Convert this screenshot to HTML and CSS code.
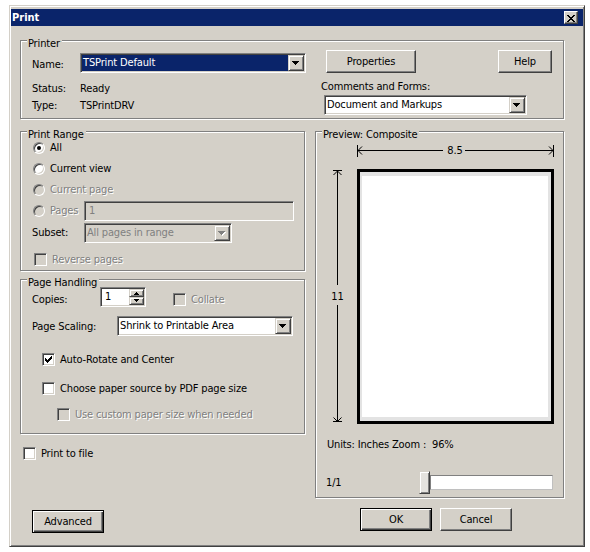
FILE: index.html
```html
<!DOCTYPE html>
<html>
<head>
<meta charset="utf-8">
<title>Print</title>
<link rel="stylesheet" href="styles.css">
</head>
<body>
<div class="window">
  <div class="titlebar">
    <span class="title">Print</span>
    <button class="close-btn" aria-label="Close"><svg width="8" height="7" viewBox="0 0 8 7"><path d="M0 0h2v1h-2z M6 0h2v1h-2z M1 1h2v1h-2z M5 1h2v1h-2z M2 2h4v1h-4z M3 3h2v1h-2z M2 4h4v1h-4z M1 5h2v1h-2z M5 5h2v1h-2z M0 6h2v1h-2z M6 6h2v1h-2z"/></svg></button>
  </div>
  <div class="content">
    <div class="group printer">
      <span class="caption">Printer</span>
      <div class="printer-left">
        <div class="row name-row">
          <span class="lbl w48">Name:</span>
          <div class="combo name-combo">
            <span class="combo-text sel">TSPrint Default</span>
            <span class="combo-btn"><svg width="7" height="4" viewBox="0 0 7 4"><path d="M0 0h7v1h-1v1h-1v1h-1v1h-1v-1h-1v-1h-1v-1h-1z"/></svg></span>
          </div>
        </div>
        <div class="row info status-row"><span class="lbl w48">Status:</span><span>Ready</span></div>
        <div class="row info type-row"><span class="lbl w48">Type:</span><span>TSPrintDRV</span></div>
      </div>
      <div class="printer-right">
        <div class="btn-row">
          <button class="btn props">Properties</button>
          <button class="btn help">Help</button>
        </div>
        <div class="comments-label">Comments and Forms:</div>
        <div class="combo comments-combo">
          <span class="combo-text">Document and Markups</span>
          <span class="combo-btn"><svg width="7" height="4" viewBox="0 0 7 4"><path d="M0 0h7v1h-1v1h-1v1h-1v1h-1v-1h-1v-1h-1v-1h-1z"/></svg></span>
        </div>
      </div>
    </div>

    <div class="columns">
      <div class="col-left">
        <div class="group range">
          <span class="caption">Print Range</span>
          <div class="row r21"><span class="radio checked"></span><span>All</span></div>
          <div class="row r21"><span class="radio"></span><span>Current view</span></div>
          <div class="row r21 disabled"><span class="radio"></span><span>Current page</span></div>
          <div class="row r21 disabled">
            <span class="radio"></span><span class="w34">Pages</span>
            <div class="field pages-field">1</div>
          </div>
          <div class="row r21 subset-row">
            <span class="lbl w52">Subset:</span>
            <div class="combo disabled-combo subset-combo">
              <span class="combo-text">All pages in range</span>
              <span class="combo-btn"><svg width="8" height="5" viewBox="0 0 8 5"><path fill="#fff" d="M1 1h7v1h-1v1h-1v1h-1v1h-1v-1h-1v-1h-1v-1h-1z"/><path fill="#808080" d="M0 0h7v1h-1v1h-1v1h-1v1h-1v-1h-1v-1h-1v-1h-1z"/></svg></span>
            </div>
          </div>
          <div class="row r13 disabled reverse-row"><span class="check"></span><span>Reverse pages</span></div>
        </div>

        <div class="group handling">
          <span class="caption">Page Handling</span>
          <div class="row copies-row">
            <span class="lbl w68">Copies:</span>
            <div class="spin">
              <span class="spin-text">1</span>
              <span class="spin-btns">
                <span class="spin-btn"><svg width="5" height="3" viewBox="0 0 5 3"><path d="M2 0h1v1h1v1h1v1h-5v-1h1v-1h1z"/></svg></span>
                <span class="spin-btn down"><svg width="5" height="3" viewBox="0 0 5 3"><path d="M0 0h5v1h-1v1h-1v1h-1v-1h-1v-1h-1z"/></svg></span>
              </span>
            </div>
            <span class="check collate"></span><span class="disabled-text collate-text">Collate</span>
          </div>
          <div class="row scaling-row">
            <span class="lbl w85">Page Scaling:</span>
            <div class="combo scaling-combo">
              <span class="combo-text">Shrink to Printable Area</span>
              <span class="combo-btn"><svg width="7" height="4" viewBox="0 0 7 4"><path d="M0 0h7v1h-1v1h-1v1h-1v1h-1v-1h-1v-1h-1v-1h-1z"/></svg></span>
            </div>
          </div>
          <div class="row r13 auto-row">
            <span class="check"><svg width="7" height="7" viewBox="0 0 7 7"><path d="M0 2h1v1h1v1h1v-1h1v-1h1v-1h1v-1h1v3h-1v1h-1v1h-1v1h-1v1h-1v-1h-1v-1h-1z"/></svg></span>
            <span>Auto-Rotate and Center</span>
          </div>
          <div class="row r13 choose-row"><span class="check white"></span><span>Choose paper source by PDF page size</span></div>
          <div class="row r13 disabled custom-row"><span class="check"></span><span>Use custom paper size when needed</span></div>
        </div>

        <div class="row r13 file-row"><span class="check white"></span><span>Print to file</span></div>
        <button class="btn default advanced">Advanced</button>
      </div>

      <div class="col-right">
        <div class="group preview">
          <span class="caption">Preview: Composite</span>
          <svg class="hdim" width="197" height="13" viewBox="0 0 197 13">
            <g stroke="#000" fill="none" stroke-width="1">
              <line x1="0.5" y1="0" x2="0.5" y2="12"/>
              <line x1="196.5" y1="0" x2="196.5" y2="12"/>
              <line x1="0.5" y1="5.5" x2="86" y2="5.5"/>
              <line x1="108" y1="5.5" x2="196.5" y2="5.5"/>
              <polyline points="5,1.5 1,5.5 5,9.5"/>
              <polyline points="192,1.5 196,5.5 192,9.5"/>
            </g>
            <text class="dim-text" x="98" y="9" text-anchor="middle">8.5</text>
          </svg>
          <div class="page-row">
            <svg class="vdim" width="16" height="255" viewBox="0 0 16 255">
              <g stroke="#000" fill="none" stroke-width="1">
                <line x1="3" y1="1.5" x2="12" y2="1.5"/>
                <polyline points="3.5,6 7.5,2 11.5,6"/>
                <line x1="7.5" y1="1.5" x2="7.5" y2="116"/>
                <line x1="7.5" y1="136" x2="7.5" y2="252.5"/>
                <polyline points="3.5,248.5 7.5,252.5 11.5,248.5"/>
                <line x1="3" y1="252.5" x2="12" y2="252.5"/>
              </g>
              <text class="dim-text" x="7.5" y="131" text-anchor="middle">11</text>
            </svg>
            <div class="page"><div class="page-inner"></div></div>
          </div>
          <div class="units">Units: Inches Zoom :&nbsp; 96%</div>
          <div class="slider-row">
            <span class="pagenum">1/1</span>
            <div class="slider"><span class="thumb"></span><span class="track"></span></div>
          </div>
        </div>
        <div class="ok-row">
          <button class="btn default ok">OK</button>
          <button class="btn cancel">Cancel</button>
        </div>
      </div>
    </div>
  </div>
</div>
</body>
</html>
```

FILE: styles.css
```css
* { box-sizing: border-box; }

body {
  margin: 0;
  background: #fff;
  color: #000;
  font-family: "DejaVu Sans Condensed", "Liberation Sans", sans-serif;
  font-size: 11px;
  line-height: 13px;
  letter-spacing: -0.15px;
}

svg { display: block; }

.window {
  width: 576px;
  height: 542px;
  margin: 5px 0 0 9px;
  background: #d4d0c8;
  border: 1px solid;
  border-color: #d4d0c8 #404040 #404040 #d4d0c8;
  box-shadow: inset 1px 1px #fff, inset -1px -1px #808080;
  padding: 3px 1px 1px 1px;
}

.titlebar {
  height: 17px;
  background: #0a246a;
  display: flex;
  align-items: center;
  padding: 0 5px 0 1px;
}

.title {
  flex: 1;
  color: #fff;
  font-weight: bold;
  letter-spacing: 0;
}

.close-btn {
  width: 14px;
  height: 13px;
  padding: 0;
  margin: 0;
  background: #d4d0c8;
  border: 1px solid;
  border-color: #fff #404040 #404040 #fff;
  box-shadow: inset -1px -1px #808080;
  display: block;
}
.close-btn svg { margin: 2px 0 0 2px; }

.content {
  padding: 14px 19px 0 9px;
}

/* group boxes */
.group {
  position: relative;
  border: 1px solid #808080;
  box-shadow: 1px 1px 0 #fff, inset 1px 1px 0 #fff;
}
.caption {
  position: absolute;
  top: -4px;
  left: 6px;
  padding: 0 2px 0 1px;
  background: #d4d0c8;
  white-space: nowrap;
}

.row {
  display: flex;
  align-items: center;
  white-space: nowrap;
}
.r21 { height: 21px; }
.r13 { height: 13px; }

.w34 { width: 34px; flex: none; }
.w48 { width: 48px; flex: none; }
.w52 { width: 52px; flex: none; }
.w68 { width: 68px; flex: none; }
.w85 { width: 85px; flex: none; }

.disabled, .disabled-text {
  color: #808080;
  text-shadow: 1px 1px 0 #fff;
}

/* buttons */
.btn {
  display: block;
  margin: 0;
  padding: 0;
  height: 23px;
  font: inherit;
  letter-spacing: inherit;
  color: #000;
  background: #d4d0c8;
  border: 1px solid;
  border-color: #fff #404040 #404040 #fff;
  box-shadow: inset -1px -1px #808080;
}
.btn.default {
  border: 1px solid #000;
  box-shadow: inset 1px 1px #fff, inset -1px -1px #404040, inset -2px -2px #808080;
}

/* combos / fields */
.combo {
  display: flex;
  height: 20px;
  padding: 1px;
  background: #fff;
  border: 1px solid;
  border-color: #808080 #fff #fff #808080;
  box-shadow: inset 1px 1px #404040, inset -1px -1px #d4d0c8;
  white-space: nowrap;
}
.combo-text {
  flex: 1;
  padding-left: 1px;
  line-height: 16px;
  overflow: hidden;
}
.combo-text.sel {
  background: #0a246a;
  color: #fff;
}
.combo-btn {
  width: 16px;
  height: 16px;
  flex: none;
  background: #d4d0c8;
  border: 1px solid;
  border-color: #d4d0c8 #404040 #404040 #d4d0c8;
  box-shadow: inset 1px 1px #fff, inset -1px -1px #808080;
}
.combo-btn svg { margin: 5px 0 0 3px; }
.disabled-combo { background: #d4d0c8; color: #808080; }

.field {
  height: 20px;
  padding-left: 4px;
  line-height: 18px;
  border: 1px solid;
  border-color: #808080 #fff #fff #808080;
  box-shadow: inset 1px 1px #404040, inset -1px -1px #d4d0c8;
  background: #d4d0c8;
  color: #808080;
  text-shadow: none;
}

/* radio & checkbox */
.radio {
  position: relative;
  flex: none;
  width: 12px;
  height: 12px;
  margin-right: 5px;
  border-radius: 50%;
  background: #fff;
  border: 1px solid;
  border-color: #808080 #fff #fff #808080;
  box-shadow: inset 1px 1px #404040, inset -1px -1px #d4d0c8;
}
.disabled .radio { background: #d4d0c8; }
.radio.checked::after {
  content: "";
  position: absolute;
  left: 3px;
  top: 3px;
  width: 4px;
  height: 4px;
  border-radius: 50%;
  background: #000;
}

.check {
  flex: none;
  width: 13px;
  height: 13px;
  margin-right: 5px;
  padding: 2px;
  background: #fff;
  border: 1px solid;
  border-color: #808080 #fff #fff #808080;
  box-shadow: inset 1px 1px #404040, inset -1px -1px #d4d0c8;
}
.disabled .check, .check.collate { background: #d4d0c8; }

/* printer group */
.printer {
  height: 79px;
  display: flex;
}
.printer-left {
  width: 285px;
  padding: 12px 0 0 11px;
}
.name-row { height: 20px; }
.name-row .lbl { margin-top: 3px; }
.name-combo { width: 227px; }
.status-row { margin-top: 9px; height: 13px; }
.type-row { margin-top: 4px; height: 13px; }

.printer-right { flex: 1; }
.btn-row { display: flex; margin-top: 9px; }
.props { width: 90px; margin-left: 20px; }
.help { width: 54px; margin-left: 82px; }
.comments-label { margin: 7px 0 0 15px; }
.comments-combo { width: 203px; margin: 2px 0 0 18px; }

/* columns */
.columns {
  display: flex;
  gap: 10px;
  margin-top: 12px;
}
.col-left { width: 285px; flex: none; }
.col-right { width: 249px; flex: none; }

/* print range */
.range {
  height: 140px;
  padding: 5px 0 0 12px;
}
.pages-field { width: 210px; }
.subset-row { margin-left: -1px; margin-top: 1px; }
.subset-combo { width: 148px; }
.reverse-row { margin: 10px 0 0 1px; }

/* page handling */
.handling {
  height: 155px;
  margin-top: 8px;
  padding: 7px 0 0 11px;
}
.copies-row { height: 20px; align-items: flex-end; }
.copies-row .lbl { margin-bottom: 1px; }
.spin {
  display: flex;
  width: 46px;
  height: 20px;
  padding: 1px;
  background: #fff;
  border: 1px solid;
  border-color: #808080 #fff #fff #808080;
  box-shadow: inset 1px 1px #404040, inset -1px -1px #d4d0c8;
}
.spin-text { flex: 1; padding-left: 3px; line-height: 16px; }
.spin-btns { width: 15px; display: flex; flex-direction: column; }
.spin-btn {
  height: 8px;
  background: #d4d0c8;
  border: 1px solid;
  border-color: #d4d0c8 #404040 #404040 #d4d0c8;
  box-shadow: inset 1px 1px #fff, inset -1px -1px #808080;
}
.spin-btn svg { margin: 2px 0 0 4px; }
.spin-btn.down svg { margin-top: 1px; }
.collate { margin: 0 5px 1px 27px; }
.collate-text { margin-bottom: 1px; }

.scaling-row { height: 20px; margin-top: 9px; }
.scaling-combo { width: 176px; }
.auto-row { margin: 17px 0 0 10px; }
.choose-row { margin: 16px 0 0 10px; }
.custom-row { margin: 13px 0 0 25px; }

.file-row { margin: 13px 0 0 3px; }
.advanced { width: 72px; margin: 50px 0 0 12px; }

/* preview */
.preview {
  height: 367px;
  padding-top: 13px;
}
.hdim { margin-left: 41px; }
.dim-text {
  font-family: "DejaVu Sans Condensed", "Liberation Sans", sans-serif;
  font-size: 11px;
  fill: #000;
}
.page-row {
  display: flex;
  margin-top: 11px;
  height: 255px;
}
.vdim { margin-left: 14px; }
.page {
  width: 197px;
  height: 255px;
  margin-left: 11px;
  border: 3px solid #000;
  padding: 4px 3px 4px 2px;
  background: #e3e3e3;
}
.page-inner { height: 100%; background: #fff; }
.units { margin: 14px 0 0 11px; }
.slider-row {
  display: flex;
  align-items: center;
  height: 23px;
  margin-top: 20px;
  padding-left: 10px;
}
.pagenum { flex: 1; }
.slider {
  display: flex;
  align-items: center;
  width: 134px;
  height: 23px;
  margin-right: 10px;
}
.thumb {
  width: 11px;
  height: 23px;
  flex: none;
  background: #e4e2de;
  border: 1px solid;
  border-color: #d4d0c8 #404040 #404040 #d4d0c8;
  box-shadow: inset 1px 1px #fff, inset -1px -1px #808080;
}
.track {
  flex: 1;
  height: 15px;
  background: #fff;
  border: 1px solid;
  border-color: #808080 #c0c0c0 #c0c0c0 #808080;
}

.ok-row {
  display: flex;
  margin: 10px 0 0 45px;
}
.ok { width: 72px; }
.cancel { width: 72px; margin-left: 8px; }
```
